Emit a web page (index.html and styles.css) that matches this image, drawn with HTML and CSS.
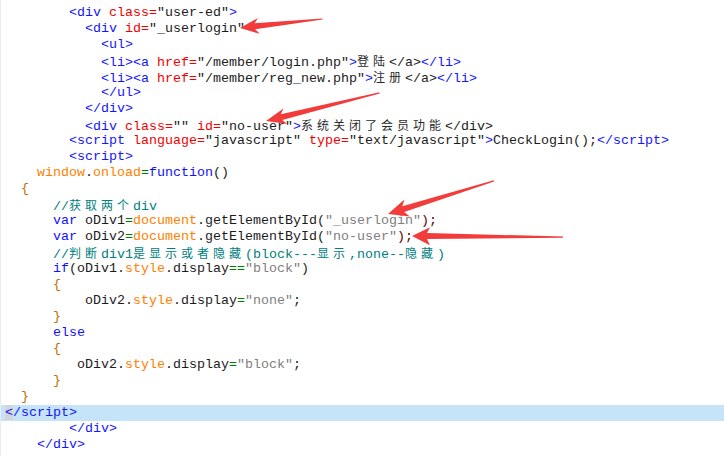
FILE: index.html
```html
<!DOCTYPE html>
<html lang="zh-CN">
<head>
  <meta charset="UTF-8">
  <title>onload 代码</title>
  <link rel="stylesheet" href="styles.css">
</head>
<body>
  <div class="editor">
    <div class="code">
<div class="ln">        <span class="tg">&lt;div</span> <span class="at">class=</span>"user-ed"<span class="tg">&gt;</span></div>
<div class="ln">          <span class="tg">&lt;div</span> <span class="at">id=</span>"_userlogin"</div>
<div class="ln">            <span class="tg">&lt;ul&gt;</span></div>
<div class="ln">            <span class="tg">&lt;li&gt;&lt;a</span> <span class="at">href=</span>"/member/login.php"<span class="tg">&gt;</span><span class="cn">登陆</span>&lt;/a&gt;<span class="tg">&lt;/li&gt;</span></div>
<div class="ln">            <span class="tg">&lt;li&gt;&lt;a</span> <span class="at">href=</span>"/member/reg_new.php"<span class="tg">&gt;</span><span class="cn">注册</span>&lt;/a&gt;<span class="tg">&lt;/li&gt;</span></div>
<div class="ln">            <span class="tg">&lt;/ul&gt;</span></div>
<div class="ln">          <span class="tg">&lt;/div&gt;</span></div>
<div class="ln">          <span class="tg">&lt;div</span> <span class="at">class=</span>"" <span class="at">id=</span>"no-user"<span class="tg">&gt;</span><span class="cn">系统关闭了会员功能</span>&lt;/div&gt;</div>
<div class="ln">        <span class="tg">&lt;script</span> <span class="at">language=</span>"javascript" <span class="at">type=</span>"text/javascript"<span class="tg">&gt;</span>CheckLogin();<span class="tg">&lt;/script&gt;</span></div>
<div class="ln">        <span class="tg">&lt;script&gt;</span></div>
<div class="ln">    <span class="ob">window</span>.<span class="ob">onload</span><span class="op">=</span><span class="kw">function</span>()</div>
<div class="ln">  <span class="br">{</span></div>
<div class="ln">      <span class="cm">//<span class="cn">获取两个</span>div</span></div>
<div class="ln">      <span class="kw">var</span> oDiv1<span class="op">=</span><span class="ob">document</span>.getElementById(<span class="js">"_userlogin"</span><span class="pu">);</span></div>
<div class="ln">      <span class="kw">var</span> oDiv2<span class="op">=</span><span class="ob">document</span>.getElementById(<span class="js">"no-user"</span><span class="pu">);</span></div>
<div class="ln">      <span class="cm">//<span class="cn">判断</span>div1<span class="cn">是显示或者隐藏</span>(block---<span class="cn">显示</span>,none--<span class="cn">隐藏</span>)</span></div>
<div class="ln">      <span class="kw">if</span>(oDiv1.<span class="ob">style</span>.display<span class="op">==</span><span class="js">"block"</span>)</div>
<div class="ln">      <span class="br">{</span></div>
<div class="ln">          oDiv2.<span class="ob">style</span>.display<span class="op">=</span><span class="js">"none"</span>;</div>
<div class="ln">      <span class="br">}</span></div>
<div class="ln">      <span class="kw">else</span></div>
<div class="ln">      <span class="br">{</span></div>
<div class="ln">         oDiv2.<span class="ob">style</span>.display<span class="op">=</span><span class="js">"block"</span>;</div>
<div class="ln">      <span class="br">}</span></div>
<div class="ln">  <span class="br">}</span></div>
<div class="ln current"><span class="tg"><span class="caret">&lt;</span>/script&gt;</span></div>
<div class="ln">        <span class="tg">&lt;/div&gt;</span></div>
<div class="ln">    <span class="tg">&lt;/div&gt;</span></div>
    </div>

    <!-- 标注箭头 -->
    <svg class="marks" width="724" height="456" viewBox="0 0 724 456">
      <g transform="translate(240 28) rotate(-6.3)">
        <polygon points="0,0 19,-8 15,-3 83,-0.5 83,0.5 15,3 19,8"/>
      </g>
      <g transform="translate(266 121) rotate(-13.9)">
        <polygon points="0,0 20,-8 16,-3 117,-0.6 117,0.6 16,3 20,8"/>
      </g>
      <g transform="translate(388 214) rotate(-17.4)">
        <polygon points="0,0 20,-9 16,-3 111,-0.6 111,0.6 16,3 20,9"/>
      </g>
      <g transform="translate(412 236) rotate(0.4)">
        <polygon points="0,0 18,-9 15,-3 151,-0.6 151,0.6 15,3 18,9"/>
      </g>
    </svg>
  </div>
</body>
</html>
```

FILE: styles.css
```css
body {
  margin: 0;
  background: #fff;
  overflow: hidden;
}

.editor {
  position: relative;
  width: 724px;
  height: 456px;
  border-left: 1px solid #ececec;
  box-sizing: border-box;
}

.code {
  padding-top: 5px;
  font-family: "Liberation Mono", "Noto Sans CJK SC", monospace;
  font-size: 13.33px;
  color: #1c1c1c;
}

.ln {
  height: 16px;
  line-height: 16px;
  padding-left: 4px;
  white-space: pre;
}

.current {
  background: #c5e4fa;
}

.caret {
  background: #d3d6d9;
}

/* 中文字占两个等宽字符的宽度 */
.cn {
  font-family: "Noto Sans CJK SC", sans-serif;
  font-size: 12px;
  letter-spacing: 4px;
  color: #2a2a2a;
}

.cm .cn {
  color: #008080;
}

.tg { color: #1414ff; }
.at { color: #f00000; }
.kw { color: #1010ff; }
.ob { color: #ff8000; }
.op { color: #008000; }
.cm { color: #008080; }
.js { color: #808080; }
.br { color: #c07000; }
.pu { color: #600000; }

.marks {
  position: absolute;
  top: 0;
  left: -1px;
  pointer-events: none;
}

.marks polygon {
  fill: #f23b3b;
}
```
